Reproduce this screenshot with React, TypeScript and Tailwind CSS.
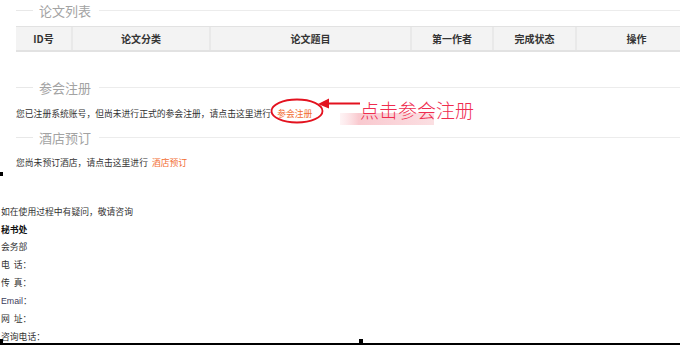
import React from "react";

const font = { fontFamily: '"Noto Sans CJK SC", "Liberation Sans", sans-serif' };

function SectionTitle({ title }: { title: string }) {
  return (
    <div className="flex h-5 items-center">
      <div className="h-px w-[17px] bg-[#e8e8e8]" />
      <span className="ml-[6px] mr-[8px] text-[13px] leading-none text-[#a3a3a3]">{title}</span>
      <div className="h-px flex-1 bg-[#ececec]" />
    </div>
  );
}

const cols = [
  { label: "ID号", w: "w-[55px]" },
  { label: "论文分类", w: "w-[138px]" },
  { label: "论文题目", w: "w-[201px]" },
  { label: "第一作者", w: "w-[82px]" },
  { label: "完成状态", w: "w-[83px]" },
  { label: "操作", w: "w-[121px]" },
];

export default function App() {
  return (
    <div className="relative h-[345px] w-[680px] overflow-hidden bg-white text-[#333]" style={font}>
      {/* main content */}
      <div className="w-[696px] pl-[16px]">
        <SectionTitle title="论文列表" />
        <div className="mt-[6px] flex h-[26px] border-t border-b-2 border-[#e2e2e2] bg-[#f3f3f3]">
          {cols.map((c, i) => (
            <div
              key={c.label}
              className={`${c.w} flex shrink-0 items-center justify-center text-[10px] font-bold text-[#333] ${
                i > 0 ? "border-l-2 border-[#e9e9e9]" : ""
              }`}
            >
              {c.label}
            </div>
          ))}
        </div>
        <div className="h-[25px]" />
        <SectionTitle title="参会注册" />
        <div className="mt-[7px] flex h-5 items-center text-[8.8px] text-[#333]">
          您已注册系统账号，但尚未进行正式的参会注册，请点击这里进行
          <span className="ml-[6px] text-[#f26d33]">参会注册</span>
        </div>
        <div className="h-[3px]" />
        <SectionTitle title="酒店预订" />
        <div className="mt-[6px] flex h-5 items-center text-[8.8px] text-[#333]">
          您尚未预订酒店，请点击这里进行
          <span className="ml-[4px] text-[#f26d33]">酒店预订</span>
        </div>
      </div>

      {/* footer info */}
      <div className="mt-[30px] pl-[1px] text-[8.8px] leading-[17.7px] text-[#333]">
        <div>如在使用过程中有疑问，敬请咨询</div>
        <div className="font-bold text-[#111]">秘书处</div>
        <div>会务部</div>
        <div>电&nbsp;&nbsp;话：</div>
        <div>传&nbsp;&nbsp;真：</div>
        <div>
          <span className="text-[#3c3c5c]" style={{ fontFamily: '"Liberation Sans", sans-serif' }}>Email</span>：
        </div>
        <div>网&nbsp;&nbsp;址：</div>
        <div>咨询电话：</div>
      </div>

      {/* annotation overlay */}
      <svg className="pointer-events-none absolute left-0 top-0" width="680" height="345">
        <ellipse cx="297" cy="111" rx="25.5" ry="11.5" fill="none" stroke="#e3121f" strokeWidth="1.8" />
        <polygon points="318,104 329,98.5 329,108.5" fill="#e3121f" />
        <line x1="327" y1="103.5" x2="360" y2="103.5" stroke="#e3121f" strokeWidth="2.2" />
        <defs>
          <linearGradient id="pk" x1="0" x2="1" y1="0" y2="0">
            <stop offset="0" stopColor="#fde3e6" stopOpacity="0.4" />
            <stop offset="0.2" stopColor="#f9c9cf" />
            <stop offset="1" stopColor="#fbdfe2" />
          </linearGradient>
        </defs>
        <rect x="340" y="113" width="94" height="12" fill="url(#pk)" />
        {/* selection handles */}
        <rect x="0" y="172" width="3" height="4" fill="#000" />
        <rect x="0" y="339" width="3" height="6" fill="#000" />
        <rect x="359" y="339" width="4" height="4" fill="#000" />
        <rect x="0" y="343" width="680" height="2" fill="#000" />
      </svg>
      <div className="absolute left-[360px] top-[98px] text-[19px] leading-[24px] font-light text-[#ef2d4f]">
        点击参会注册
      </div>
    </div>
  );
}
